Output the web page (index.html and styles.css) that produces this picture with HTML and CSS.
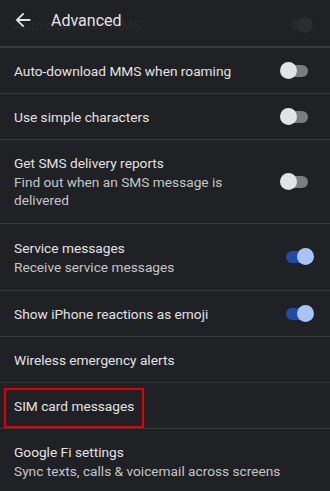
FILE: index.html
```html
<!DOCTYPE html>
<html>
<head>
<meta charset="utf-8">
<link rel="stylesheet" href="styles.css">
</head>
<body>
<div class="screen">
  <header class="appbar">
    <div class="ghost">
      <span class="ghost-text">Auto-download MMS</span>
      <span class="ghost-toggle"></span>
    </div>
    <svg class="back" viewBox="0 0 24 24" width="22" height="22"><path d="M20 11H7.83l5.59-5.59L12 4l-8 8 8 8 1.41-1.41L7.83 13H20v-2z" fill="#e3e3e3"/></svg>
    <span class="title">Advanced</span>
  </header>
  <div class="list">
    <div class="row">
      <div class="texts"><div class="t">Auto-download MMS when roaming</div></div>
      <div class="switch"><span class="track"></span><span class="thumb"></span></div>
    </div>
    <div class="row">
      <div class="texts"><div class="t">Use simple characters</div></div>
      <div class="switch"><span class="track"></span><span class="thumb"></span></div>
    </div>
    <div class="row two">
      <div class="texts"><div class="t">Get SMS delivery reports</div><div class="s">Find out when an SMS message is<br>delivered</div></div>
      <div class="switch"><span class="track"></span><span class="thumb"></span></div>
    </div>
    <div class="row two tall">
      <div class="texts"><div class="t">Service messages</div><div class="s">Receive service messages</div></div>
      <div class="switch on"><span class="track"></span><span class="thumb"></span></div>
    </div>
    <div class="row">
      <div class="texts"><div class="t">Show iPhone reactions as emoji</div></div>
      <div class="switch on"><span class="track"></span><span class="thumb"></span></div>
    </div>
    <div class="row">
      <div class="texts"><div class="t">Wireless emergency alerts</div></div>
    </div>
    <div class="row marked">
      <div class="texts"><div class="t">SIM card messages</div></div>
      <span class="highlight"></span>
    </div>
    <div class="row two last">
      <div class="texts"><div class="t">Google Fi settings</div><div class="s">Sync texts, calls &amp; voicemail across screens</div></div>
    </div>
  </div>
</div>
</body>
</html>
```
FILE: styles.css
```css
html, body {
  margin: 0;
  padding: 0;
  background: #202124;
}
.screen {
  width: 330px;
  height: 491px;
  overflow: hidden;
  background: #202124;
  font-family: Roboto, "Noto Sans", sans-serif;
  color: #e3e3e3;
}
.appbar {
  position: relative;
  height: 46px;
  border-bottom: 2px solid #38393c;
  display: flex;
  align-items: center;
  background: #202124;
}
.ghost {
  position: absolute;
  left: 0;
  right: 0;
  top: 14px;
  height: 22px;
  display: flex;
  align-items: center;
  justify-content: space-between;
  padding: 0 17px 0 14px;
}
.ghost-text {
  font-size: 13.7px;
  color: #2a2b2e;
}
.ghost-toggle {
  width: 16px;
  height: 16px;
  border-radius: 50%;
  background: #2c2d30;
  box-shadow: -8px 0 0 -2px #27282b;
}
.back {
  position: relative;
  margin-left: 12px;
  margin-top: -6px;
}
.title {
  position: relative;
  margin-left: 17px;
  margin-top: -6px;
  font-size: 16px;
  color: #e3e3e3;
}
.list {
  display: flex;
  flex-direction: column;
}
.row {
  position: relative;
  display: flex;
  align-items: center;
  justify-content: space-between;
  min-height: 46px;
  border-bottom: 1px solid #36373a;
  padding: 0 16px 0 14px;
  box-sizing: border-box;
}
.row.two {
  padding-top: 13px;
  padding-bottom: 14px;
}
.row.tall {
  min-height: 67px;
  padding-top: 13px;
}
.row.last {
  border-bottom: none;
  padding-top: 13px;
}
.t {
  font-size: 13.7px;
  line-height: 20px;
  color: #e3e3e3;
}
.s {
  font-size: 13.7px;
  line-height: 18px;
  color: #c4c7c5;
}
.switch {
  position: relative;
  width: 34px;
  height: 17px;
  flex: none;
}
.track {
  position: absolute;
  left: 6px;
  top: 3px;
  width: 22px;
  height: 12px;
  border-radius: 6px;
  background: #7b7c7e;
}
.thumb {
  position: absolute;
  left: 0;
  top: 0;
  width: 17px;
  height: 17px;
  border-radius: 50%;
  background: #e3e3e3;
}
.switch.on .track {
  background: #2149a6;
}
.switch.on .thumb {
  left: 17px;
  background: #a8c4f7;
}
.highlight {
  position: absolute;
  left: 4px;
  top: 5px;
  width: 140px;
  height: 40px;
  border: 2px solid #e60000;
  box-sizing: border-box;
}
```
